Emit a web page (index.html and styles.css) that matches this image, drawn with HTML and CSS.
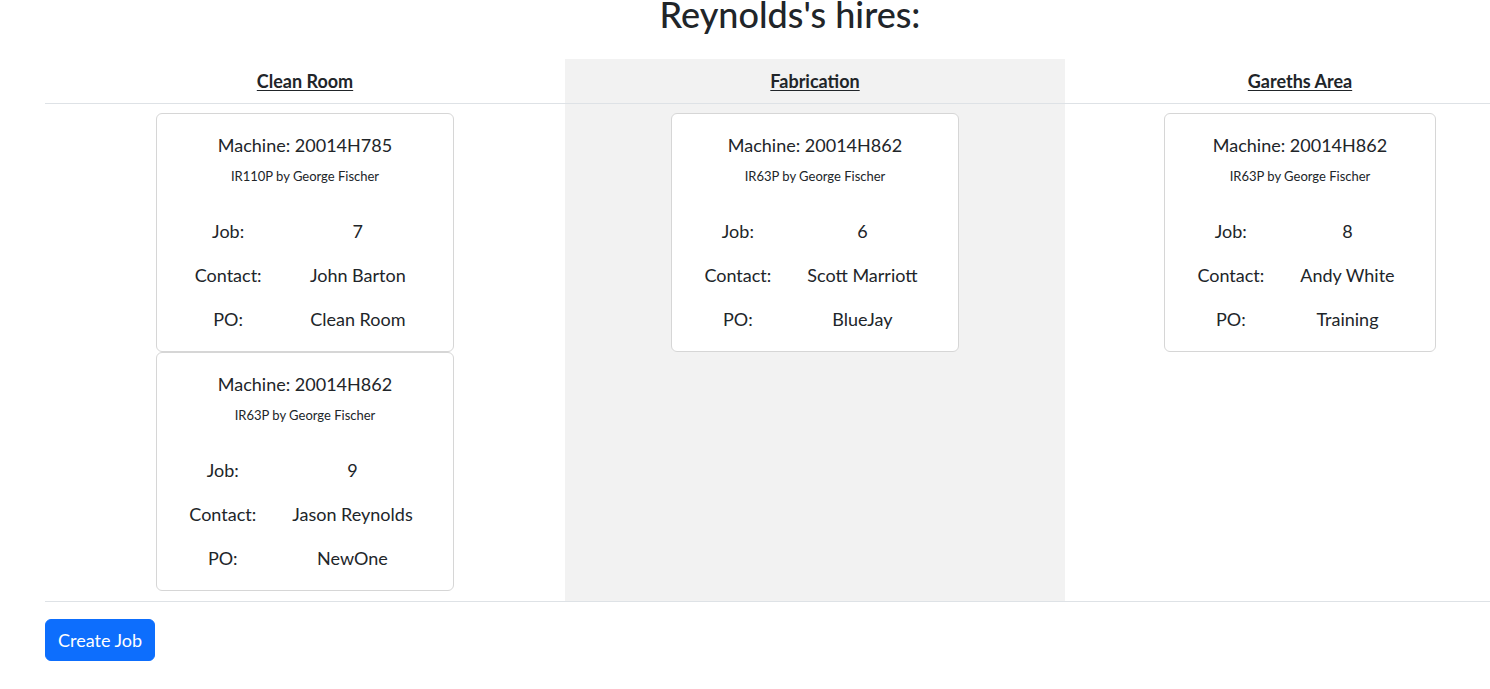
FILE: index.html
```html
<!DOCTYPE html>
<html lang="en">
<head>
<meta charset="utf-8">
<title>Reynolds's hires</title>
<link rel="stylesheet" href="styles.css">
</head>
<body>
<div class="page">
  <h1 class="title">Reynolds's hires:</h1>
  <table class="hires">
    <colgroup>
      <col class="col-a">
      <col class="col-b">
      <col class="col-c">
    </colgroup>
    <thead>
      <tr>
        <th><u>Clean Room</u></th>
        <th class="alt"><u>Fabrication</u></th>
        <th><u>Gareths Area</u></th>
      </tr>
    </thead>
    <tbody>
      <tr>
        <td>
          <div class="stack">
            <div class="card">
              <div class="card-title">Machine: 20014H785</div>
              <div class="card-sub">IR110P by George Fischer</div>
              <table class="info">
                <tr><td>Job:</td><td>7</td></tr>
                <tr><td>Contact:</td><td>John Barton</td></tr>
                <tr><td>PO:</td><td>Clean Room</td></tr>
              </table>
            </div>
            <div class="card">
              <div class="card-title">Machine: 20014H862</div>
              <div class="card-sub">IR63P by George Fischer</div>
              <table class="info">
                <tr><td>Job:</td><td>9</td></tr>
                <tr><td>Contact:</td><td>Jason Reynolds</td></tr>
                <tr><td>PO:</td><td>NewOne</td></tr>
              </table>
            </div>
          </div>
        </td>
        <td class="alt">
          <div class="stack">
            <div class="card">
              <div class="card-title">Machine: 20014H862</div>
              <div class="card-sub">IR63P by George Fischer</div>
              <table class="info">
                <tr><td>Job:</td><td>6</td></tr>
                <tr><td>Contact:</td><td>Scott Marriott</td></tr>
                <tr><td>PO:</td><td>BlueJay</td></tr>
              </table>
            </div>
          </div>
        </td>
        <td>
          <div class="stack">
            <div class="card">
              <div class="card-title">Machine: 20014H862</div>
              <div class="card-sub">IR63P by George Fischer</div>
              <table class="info">
                <tr><td>Job:</td><td>8</td></tr>
                <tr><td>Contact:</td><td>Andy White</td></tr>
                <tr><td>PO:</td><td>Training</td></tr>
              </table>
            </div>
          </div>
        </td>
      </tr>
    </tbody>
  </table>
  <button class="btn" type="button">Create Job</button>
</div>
</body>
</html>
```

FILE: styles.css
```css
html, body {
  margin: 0;
  padding: 0;
  overflow: hidden;
  background: #fff;
}

body {
  font-family: Lato, "Noto Sans", sans-serif;
  color: #212529;
  font-size: 18px;
}

.page {
  margin-left: 45px;
  width: 1490px;
}

.title {
  margin: 0 0 30px;
  font-size: 36px;
  line-height: 29px;
  padding-top: 0;
  font-weight: 500;
  text-align: center;
}

.hires {
  width: 1490px;
  table-layout: fixed;
  border-collapse: collapse;
}

.col-a { width: 520px; }
.col-b { width: 500px; }
.col-c { width: 470px; }

.hires th {
  height: 44px;
  padding: 0;
  font-size: 18px;
  font-weight: 700;
  text-align: center;
  vertical-align: middle;
  border-bottom: 1px solid #dee2e6;
}

.hires th u {
  text-underline-offset: 2px;
}

.hires > tbody > tr > td {
  padding: 9px 0 10px;
  text-align: center;
  vertical-align: top;
  border-bottom: 1px solid #dee2e6;
}

.alt {
  background: #f2f2f2;
}

.stack {
  display: inline-block;
  vertical-align: top;
}

.card {
  background: #fff;
  border: 1px solid #d6d6d6;
  border-radius: 6px;
  padding: 18px 18px 10px;
  height: 239px;
  box-sizing: border-box;
}

.card-title {
  font-size: 18px;
  line-height: 27px;
  margin-bottom: 7px;
}

.card-sub {
  font-size: 13px;
  line-height: 20px;
  margin-bottom: 23px;
}

.info {
  width: 100%;
  border-collapse: collapse;
}

.info td {
  height: 44px;
  padding: 0 22px 0 14px;
  text-align: center;
  vertical-align: middle;
  white-space: nowrap;
  font-size: 18px;
}

.btn {
  margin-top: 17px;
  height: 42px;
  padding: 0 12px;
  font-family: inherit;
  font-size: 18px;
  color: #fff;
  background: #0d6efd;
  border: 1px solid #0d6efd;
  border-radius: 6px;
  cursor: pointer;
}
```
